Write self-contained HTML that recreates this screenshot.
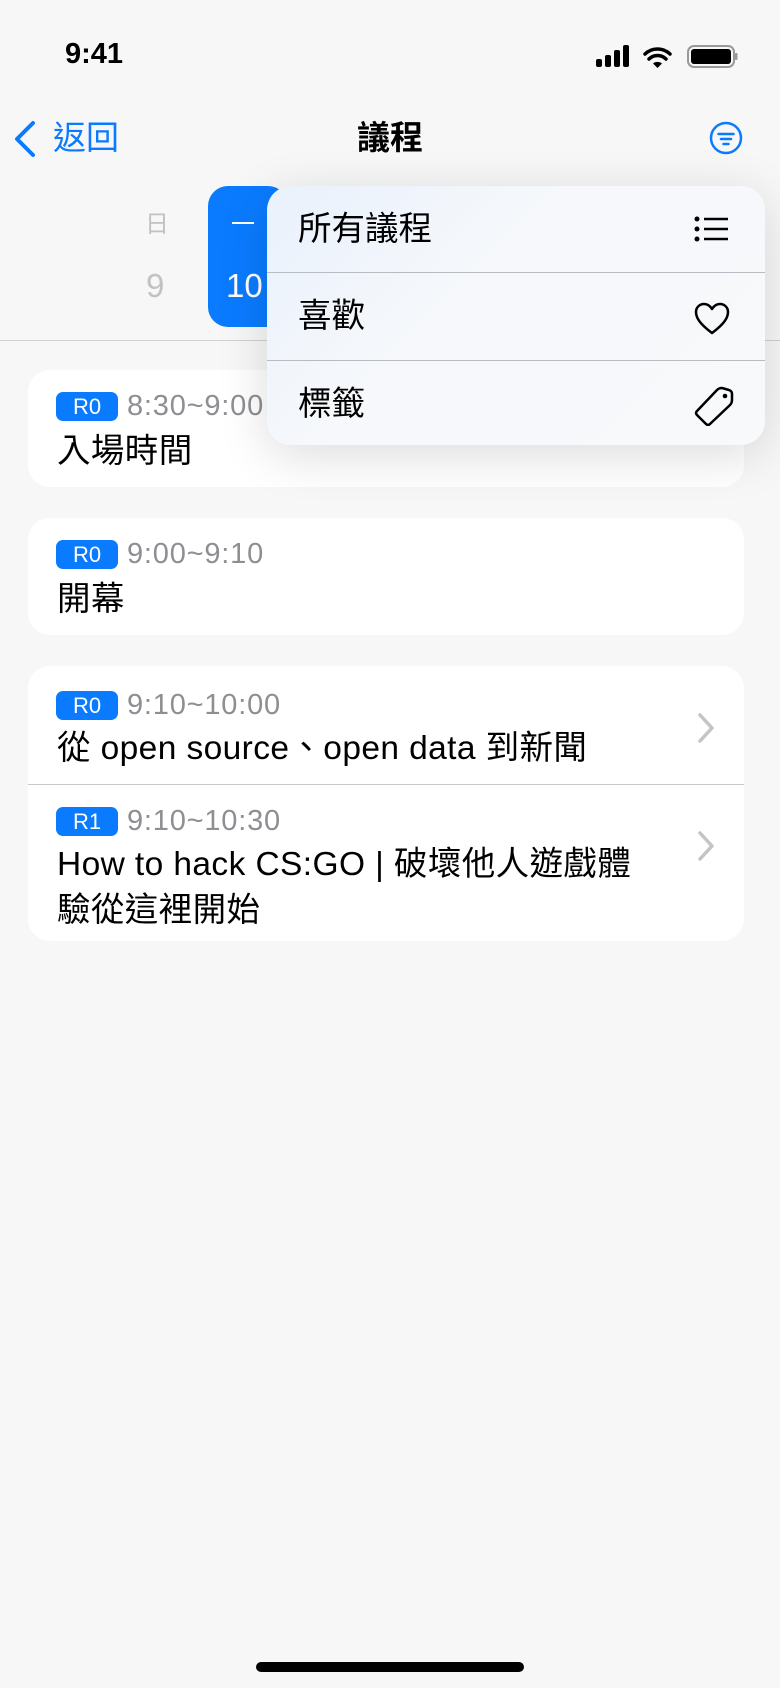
<!DOCTYPE html>
<html><head><meta charset="utf-8"><style>
*{margin:0;padding:0;box-sizing:border-box}
body{width:780px;height:1688px;background:#f7f7f7;position:relative;overflow:hidden;font-family:"Liberation Sans","Noto Sans CJK TC",sans-serif;color:#000}
.a{position:absolute}
.card{position:absolute;left:28px;width:716px;background:#fff;border-radius:22px}
.badge{position:absolute;left:28px;width:62px;height:29px;background:#0a7bff;color:#fff;border-radius:7px;font-size:22px;line-height:29px;text-align:center}
.time{position:absolute;left:99px;color:#8e8e93;font-size:29px;letter-spacing:0.8px;line-height:29px;white-space:nowrap}
.title{position:absolute;left:29px;font-size:33.5px;letter-spacing:0.4px;line-height:46px;white-space:nowrap}
.chev{position:absolute;right:28px}
.mi{position:absolute;left:0;width:498px;height:88px}
.mi span{position:absolute;left:31px;top:24px;font-size:33.5px;line-height:40px}
.mi svg{position:absolute;left:427px}
</style></head><body>
<div class="a" style="left:65px;top:36px;font-size:29px;font-weight:bold;line-height:36px">9:41</div>
<svg class="a" style="left:594px;top:44px" width="144" height="26" viewBox="0 0 144 26">
<rect x="2" y="15" width="6" height="8" rx="2"/><rect x="11" y="11" width="6" height="12" rx="2"/><rect x="20" y="6" width="6" height="17" rx="2"/><rect x="29" y="1" width="6" height="22" rx="2"/>
<path d="M51 10 A18 18 0 0 1 76 10" stroke="#000" stroke-width="3.5" fill="none" stroke-linecap="round"/><path d="M55 15 A12 12 0 0 1 72 15" stroke="#000" stroke-width="3.5" fill="none" stroke-linecap="round"/><path d="M59 19.5 L63.5 24 L68 19.5 A7 7 0 0 0 59 19.5Z"/>
<rect x="94" y="2" width="46" height="21" rx="6" fill="none" stroke="#999" stroke-width="2"/><rect x="97" y="5" width="40" height="15" rx="3"/><rect x="141" y="9" width="2.5" height="7" rx="1" fill="#999"/>
</svg>
<svg class="a" style="left:12px;top:120px" width="26" height="38" viewBox="0 0 26 38"><path d="M21 3 L5 19 L21 35" stroke="#0a7bff" stroke-width="4" fill="none" stroke-linecap="round" stroke-linejoin="round"/></svg>
<div class="a" style="left:53px;top:118px;font-size:33px;color:#0a7bff;line-height:40px">返回</div>
<div class="a" style="left:0;width:780px;text-align:center;top:118px;font-size:33px;font-weight:bold;line-height:40px">議程</div>
<svg class="a" style="left:709px;top:121px" width="34" height="34" viewBox="0 0 34 34"><circle cx="17" cy="17" r="15" stroke="#0a7bff" stroke-width="2.5" fill="none"/><path d="M9.5 13h15M12 18h10M14.5 23h5" stroke="#0a7bff" stroke-width="2.5" stroke-linecap="round"/></svg>
<div class="a" style="left:145px;top:208px;font-size:24px;color:#c2c2c2;line-height:34px">日</div>
<div class="a" style="left:146px;top:266px;font-size:33px;color:#c2c2c2;line-height:40px">9</div>
<div class="a" style="left:208px;top:186px;width:80px;height:141px;background:#0a7bff;border-radius:20px"></div>
<div class="a" style="left:231px;top:208px;font-size:24px;color:#fff;line-height:34px">一</div>
<div class="a" style="left:226px;top:266px;font-size:33px;color:#fff;line-height:40px">10</div>
<div class="a" style="left:0;top:340px;width:780px;height:1px;background:#d0d0d0"></div>

<div class="card" style="top:370px;height:117px">
<div class="badge" style="top:22px">R0</div><div class="time" style="top:22px">8:30~9:00</div>
<div class="title" style="top:59px">入場時間</div></div>
<div class="card" style="top:518px;height:117px">
<div class="badge" style="top:22px">R0</div><div class="time" style="top:22px">9:00~9:10</div>
<div class="title" style="top:59px">開幕</div></div>
<div class="card" style="top:666px;height:275px">
<div class="badge" style="top:25px">R0</div><div class="time" style="top:25px">9:10~10:00</div>
<div class="title" style="top:60px">從 open source、open data 到新聞</div>
<svg class="chev" style="top:46px" width="20" height="32" viewBox="0 0 20 32"><path d="M4 3 L16 16 L4 29" stroke="#c4c4c7" stroke-width="3.5" fill="none" stroke-linecap="round" stroke-linejoin="round"/></svg>
<div class="a" style="left:0;top:118px;width:716px;height:1px;background:#c8c8c8"></div>
<div class="badge" style="top:141px">R1</div><div class="time" style="top:141px">9:10~10:30</div>
<div class="title" style="top:176px">How to hack CS:GO | 破壞他人遊戲體</div>
<div class="title" style="top:222px">驗從這裡開始</div>
<svg class="chev" style="top:164px" width="20" height="32" viewBox="0 0 20 32"><path d="M4 3 L16 16 L4 29" stroke="#c4c4c7" stroke-width="3.5" fill="none" stroke-linecap="round" stroke-linejoin="round"/></svg>
</div>

<div class="a" style="left:267px;top:186px;width:498px;height:259px;border-radius:24px;background:linear-gradient(135deg,#e9f1fc 0%,#f6f8fb 40%,#f8f9fb 100%);box-shadow:0 10px 50px rgba(0,0,0,0.14)">
<div class="mi" style="top:0"><span>所有議程</span>
<svg style="top:30px" width="36" height="28" viewBox="0 0 36 28"><circle cx="3" cy="3" r="2.5"/><circle cx="3" cy="13" r="2.5"/><circle cx="3" cy="23" r="2.5"/><path d="M10 3h24M10 13h24M10 23h24" stroke="#000" stroke-width="2.5"/></svg></div>
<div class="a" style="left:0;top:86px;width:498px;height:1px;background:#b8bcc2"></div>
<div class="mi" style="top:87px"><span>喜歡</span>
<svg style="top:29px" width="36" height="34" viewBox="0 0 36 34"><path d="M18 31 C6 22 2 16 2 10 C2 5 6 2 10 2 C14 2 16.5 4.5 18 7 C19.5 4.5 22 2 26 2 C30 2 34 5 34 10 C34 16 30 22 18 31Z" stroke="#000" stroke-width="2.5" fill="none" stroke-linejoin="round"/></svg></div>
<div class="a" style="left:0;top:174px;width:498px;height:1px;background:#b8bcc2"></div>
<div class="mi" style="top:175px"><span>標籤</span>
<svg style="top:25px" width="40" height="40" viewBox="0 0 40 40"><path d="M3 25 L23 4 Q25 2 28 2 L35 4 Q38 5 38 8 L38 14 Q38 17 36 19 L16 38 Q14 40 12 38 L3 29 Q1 27 3 25Z" stroke="#000" stroke-width="2.5" fill="none" stroke-linejoin="round"/><circle cx="31" cy="10" r="2.3"/></svg></div>
</div>

<div class="a" style="left:256px;top:1662px;width:268px;height:10px;border-radius:5px;background:#000"></div>
</body></html>
